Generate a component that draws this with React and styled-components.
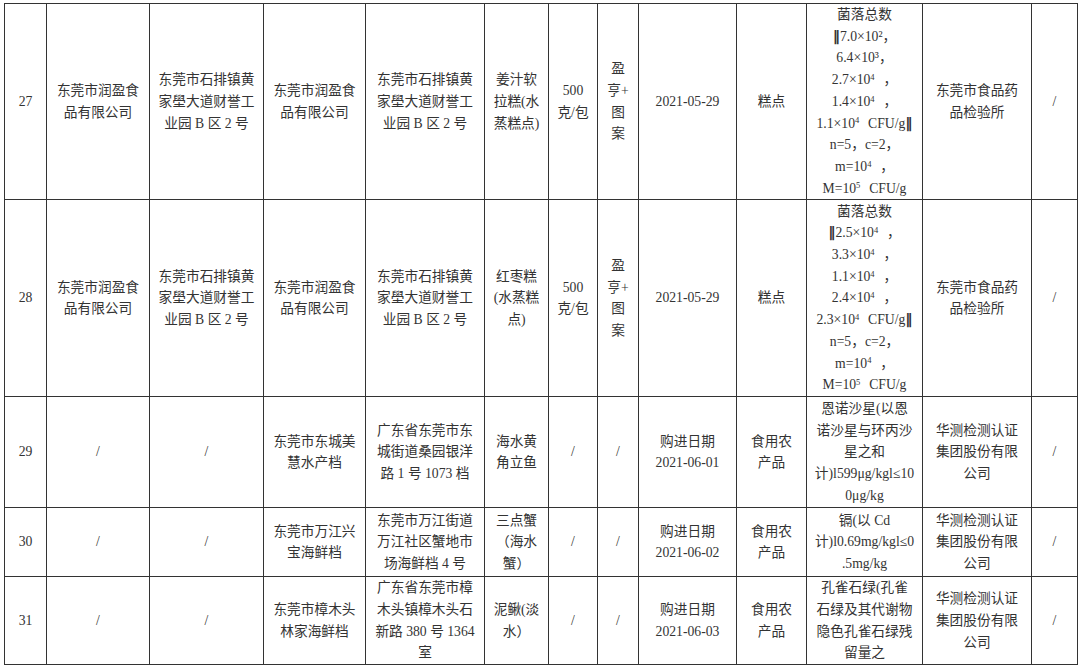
import React from 'react'
import styled, { createGlobalStyle } from 'styled-components'

const GlobalStyle = createGlobalStyle`
  html, body {
    margin: 0;
    padding: 0;
    background: #fff;
  }
  body {
    font-family: "Liberation Serif", "Noto Sans CJK SC", serif;
    color: #333;
  }
`

const widths = [42, 103, 114, 102, 119, 64, 49, 41, 98, 70, 116, 109, 46]

const Sup = styled.span`
  font-size: 0.62em;
  position: relative;
  top: -0.5em;
  line-height: 0;
  margin-right: 2px;
`

const Bar = styled.span`
  font-family: "DejaVu Sans", sans-serif;
  font-weight: bold;
  font-size: 1.05em;
`

const colonyA = [
  '菌落总数',
  <><Bar>‖</Bar>7.0×10²，</>,
  <>6.4×10³，</>,
  <>2.7×10<Sup>4</Sup>&nbsp; ，</>,
  <>1.4×10<Sup>4</Sup>&nbsp; ，</>,
  <>1.1×10<Sup>4</Sup>&nbsp; CFU/g<Bar>‖</Bar></>,
  'n=5，c=2，',
  <>m=10<Sup>4</Sup>&nbsp; ，</>,
  <>M=10<Sup>5</Sup>&nbsp; CFU/g</>,
]

const colonyB = [
  '菌落总数',
  <><Bar>‖</Bar>2.5×10<Sup>4</Sup>&nbsp; ，</>,
  <>3.3×10<Sup>4</Sup>&nbsp; ，</>,
  <>1.1×10<Sup>4</Sup>&nbsp; ，</>,
  <>2.4×10<Sup>4</Sup>&nbsp; ，</>,
  <>2.3×10<Sup>4</Sup>&nbsp; CFU/g<Bar>‖</Bar></>,
  'n=5，c=2，',
  <>m=10<Sup>4</Sup>&nbsp; ，</>,
  <>M=10<Sup>5</Sup>&nbsp; CFU/g</>,
]

const company = ['东莞市润盈食', '品有限公司']
const factory = ['东莞市石排镇黄', '家壆大道财誉工', '业园 B 区 2 号']
const lab = ['华测检测认证', '集团股份有限', '公司']

const rows = [
  {
    h: 196,
    cells: [
      ['27'], company, factory, company, factory,
      ['姜汁软', '拉糕(水', '蒸糕点)'],
      ['500', '克/包'],
      ['盈', '亨+', '图', '案'],
      ['2021-05-29'], ['糕点'], colonyA,
      ['东莞市食品药', '品检验所'], ['/'],
    ],
  },
  {
    h: 197,
    cells: [
      ['28'], company, factory, company, factory,
      ['红枣糕', '(水蒸糕', '点)'],
      ['500', '克/包'],
      ['盈', '亨+', '图', '案'],
      ['2021-05-29'], ['糕点'], colonyB,
      ['东莞市食品药', '品检验所'], ['/'],
    ],
  },
  {
    h: 111,
    cells: [
      ['29'], ['/'], ['/'],
      ['东莞市东城美', '慧水产档'],
      ['广东省东莞市东', '城街道桑园银洋', '路 1 号 1073 档'],
      ['海水黄', '角立鱼'],
      ['/'], ['/'],
      ['购进日期', '2021-06-01'],
      ['食用农', '产品'],
      ['恩诺沙星(以恩', '诺沙星与环丙沙', '星之和', '计)l599μg/kgl≤10', '0μg/kg'],
      lab, ['/'],
    ],
  },
  {
    h: 69,
    cells: [
      ['30'], ['/'], ['/'],
      ['东莞市万江兴', '宝海鲜档'],
      ['东莞市万江街道', '万江社区蟹地市', '场海鲜档 4 号'],
      ['三点蟹', '（海水', '蟹）'],
      ['/'], ['/'],
      ['购进日期', '2021-06-02'],
      ['食用农', '产品'],
      ['镉(以 Cd', '计)l0.69mg/kgl≤0', '.5mg/kg'],
      lab, ['/'],
    ],
  },
  {
    h: 87,
    cells: [
      ['31'], ['/'], ['/'],
      ['东莞市樟木头', '林家海鲜档'],
      ['广东省东莞市樟', '木头镇樟木头石', '新路 380 号 1364', '室'],
      ['泥鳅(淡', '水）'],
      ['/'], ['/'],
      ['购进日期', '2021-06-03'],
      ['食用农', '产品'],
      ['孔雀石绿(孔雀', '石绿及其代谢物', '隐色孔雀石绿残', '留量之'],
      lab, ['/'],
    ],
  },
]

export default () => (
  <Page>
    <GlobalStyle />
    <Table>
      <colgroup>
        {widths.map((w, i) => (
          <col key={i} style={{ width: w }} />
        ))}
      </colgroup>
      <tbody>
        {rows.map((row, r) => (
          <Row key={r} $h={row.h}>
            {row.cells.map((lines, c) => (
              <Cell key={c}>
                {lines.map((line, l) => (
                  <Line key={l}>{line}</Line>
                ))}
              </Cell>
            ))}
          </Row>
        ))}
      </tbody>
    </Table>
  </Page>
)

const Page = styled.div`
  padding: 3px 0 0 4px;
  width: 1080px;
  height: 669px;
  box-sizing: border-box;
  overflow: hidden;
`

const Table = styled.table`
  width: 1073px;
  table-layout: fixed;
  border-collapse: collapse;
  font-size: 13.7px;
`

const Row = styled.tr`
  height: ${(p) => p.$h}px;
`

const Cell = styled.td`
  border: 1px solid #333;
  padding: 0 3px;
  text-align: center;
  vertical-align: middle;
  line-height: 21.7px;
  overflow: hidden;
`

const Line = styled.div`
  white-space: nowrap;
`
